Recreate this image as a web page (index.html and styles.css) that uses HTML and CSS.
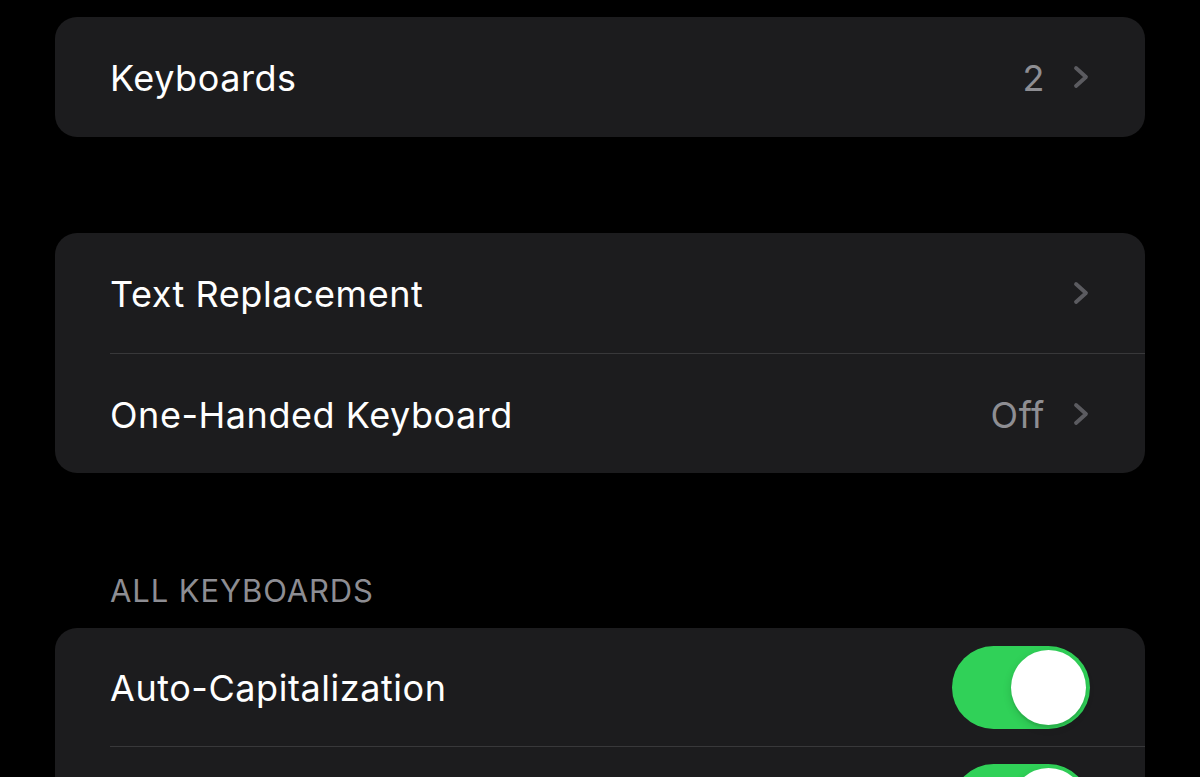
FILE: index.html
```html
<!DOCTYPE html>
<html lang="en">
<head>
    <meta charset="UTF-8">
    <meta name="viewport" content="width=device-width, initial-scale=1.0">
    <title>Keyboards</title>
    <link rel="stylesheet" href="styles.css">
</head>
<body>
    <div class="settings">
        <div class="group">
            <div class="row">
                <div class="row__body">
                    <span class="row__label">Keyboards</span>
                    <span class="row__value">2</span>
                    <svg class="chevron" viewBox="0 0 16 24" width="16" height="24"><path d="M3 3 L13 12 L3 21" /></svg>
                </div>
            </div>
        </div>

        <div class="group">
            <div class="row">
                <div class="row__body">
                    <span class="row__label">Text Replacement</span>
                    <svg class="chevron" viewBox="0 0 16 24" width="16" height="24"><path d="M3 3 L13 12 L3 21" /></svg>
                </div>
            </div>
            <div class="row">
                <div class="row__body">
                    <span class="row__label">One-Handed Keyboard</span>
                    <span class="row__value">Off</span>
                    <svg class="chevron" viewBox="0 0 16 24" width="16" height="24"><path d="M3 3 L13 12 L3 21" /></svg>
                </div>
            </div>
        </div>

        <div class="section-header">ALL KEYBOARDS</div>
        <div class="group">
            <div class="row row--toggle">
                <div class="row__body">
                    <span class="row__label">Auto-Capitalization</span>
                    <span class="switch switch--on"><span class="switch__thumb"></span></span>
                </div>
            </div>
            <!-- next row is below the fold, only its switch peeks in -->
            <div class="row row--toggle">
                <div class="row__body">
                    <span class="row__label"></span>
                    <span class="switch switch--on"><span class="switch__thumb"></span></span>
                </div>
            </div>
        </div>
    </div>
</body>
</html>
```

FILE: styles.css
```css
* {
    margin: 0;
    padding: 0;
    box-sizing: border-box;
}

html, body {
    height: 100%;
}

body {
    background-color: #000;
    color: #fff;
    font-family: Inter, "Noto Sans", sans-serif;
    overflow: hidden;
}

.settings {
    padding: 17px 55px 0;
    display: flex;
    flex-direction: column;
}

.group {
    background-color: #1c1c1e;
    border-radius: 22px;
    overflow: hidden;
}

.group + .group {
    margin-top: 96px;
}

.row {
    padding-left: 55px;
}

.row__body {
    height: 120px;
    display: flex;
    align-items: center;
    padding-right: 56px;
}

.row + .row .row__body {
    border-top: 1.5px solid #38383a;
}

.row--toggle .row__body {
    height: 118px;
}

.row__label {
    flex: 1;
    font-size: 36px;
    letter-spacing: 0.55px;
    padding-top: 2px;
}

.row__value {
    font-size: 36px;
    letter-spacing: 0.55px;
    color: #8e8e93;
    margin-right: 28px;
    padding-top: 2px;
}

.chevron {
    fill: none;
    stroke: #5b5b60;
    stroke-width: 3.8;
    stroke-linecap: round;
    stroke-linejoin: round;
}

.section-header {
    margin: 98px 0 17px 55px;
    font-size: 31px;
    line-height: 40px;
    letter-spacing: 0.9px;
    color: #8d8d93;
}

.switch {
    width: 138px;
    height: 83px;
    border-radius: 42px;
    background-color: #30d158;
    display: flex;
    align-items: center;
    justify-content: flex-end;
    padding: 0 4px;
    margin-right: -1px;
}

.switch__thumb {
    width: 75px;
    height: 75px;
    border-radius: 50%;
    background-color: #fff;
    box-shadow: 0 3px 8px rgba(0, 0, 0, 0.15), 0 3px 1px rgba(0, 0, 0, 0.06);
}
```
